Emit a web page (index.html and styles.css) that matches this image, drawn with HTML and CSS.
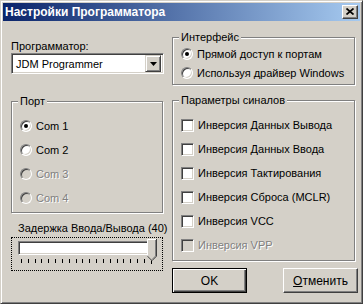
FILE: index.html
```html
<!DOCTYPE html>
<html lang="ru">
<head>
  <meta charset="UTF-8">
  <title>Настройки Программатора</title>
  <link rel="stylesheet" href="styles.css">
</head>
<body>
  <div class="window">
    <div class="titlebar">
      <span class="title">Настройки Программатора</span>
      <span class="close">
        <svg width="8" height="7" viewBox="0 0 8 7"><path d="M0.5 0.5L7.5 6.5M7.5 0.5L0.5 6.5" stroke="#000" stroke-width="1.7"/></svg>
      </span>
    </div>

    <div class="client">
      <!-- left column -->
      <div class="col">
        <div class="label prog-label">Программатор:</div>
        <div class="combo">
          <span class="combo-text">JDM Programmer</span>
          <span class="combo-btn">
            <svg width="7" height="4" viewBox="0 0 7 4"><path d="M0 0H7L3.5 4Z" fill="#000"/></svg>
          </span>
        </div>

        <fieldset class="group port">
          <legend>Порт</legend>
          <div class="opts tall">
            <div class="opt"><span class="radio checked"></span><span>Com 1</span></div>
            <div class="opt"><span class="radio"></span><span>Com 2</span></div>
            <div class="opt disabled"><span class="radio"></span><span>Com 3</span></div>
            <div class="opt disabled"><span class="radio"></span><span>Com 4</span></div>
          </div>
        </fieldset>

        <div class="label delay-label">Задержка Ввода/Вывода (40)</div>
        <div class="trackbar">
          <div class="channel"></div>
          <div class="ticks">
            <i></i><i></i><i></i><i></i><i></i><i></i><i></i><i></i><i></i><i></i>
            <i></i><i></i><i></i><i></i><i></i><i></i><i></i><i></i><i></i><i class="last"></i>
          </div>
          <svg class="thumb" width="10" height="23" viewBox="0 0 10 23">
            <path d="M0 0H10V17L5 22L0 17Z" fill="#d4d0c8"/>
            <path d="M0.5 17V0.5H9" stroke="#fff" fill="none"/>
            <path d="M8.5 1V17L5 20.5" stroke="#808080" fill="none"/>
            <path d="M9.5 0V17.2L5 21.7L0.3 17" stroke="#404040" fill="none"/>
          </svg>
        </div>
      </div>

      <!-- right column -->
      <div class="col">
        <fieldset class="group iface">
          <legend>Интерфейс</legend>
          <div class="opts">
            <div class="opt"><span class="radio checked"></span><span>Прямой доступ к портам</span></div>
            <div class="opt"><span class="radio"></span><span>Используя драйвер Windows</span></div>
          </div>
        </fieldset>

        <fieldset class="group signals">
          <legend>Параметры синалов</legend>
          <div class="opts tall">
            <div class="opt"><span class="check"></span><span>Инверсия Данных Вывода</span></div>
            <div class="opt"><span class="check"></span><span>Инверсия Данных Ввода</span></div>
            <div class="opt"><span class="check"></span><span>Инверсия Тактирования</span></div>
            <div class="opt"><span class="check"></span><span>Инверсия Сброса (MCLR)</span></div>
            <div class="opt"><span class="check"></span><span>Инверсия VCC</span></div>
            <div class="opt disabled"><span class="check"></span><span>Инверсия VPP</span></div>
          </div>
        </fieldset>

        <div class="buttons">
          <button class="btn default">OK</button>
          <button class="btn"><u>О</u>тменить</button>
        </div>
      </div>
    </div>
  </div>
</body>
</html>
```

FILE: styles.css
```css
/* Windows 2000 style dialog */
body {
  margin: 0;
  font-family: 'Liberation Sans', Arial, sans-serif;
  font-size: 11px;
  color: #000;
  background: #d4d0c8;
}

.window {
  width: 363px;
  height: 304px;
  box-sizing: border-box;
  background: #d4d0c8;
  border: 1px solid;
  border-color: #d4d0c8 #404040 #404040 #d4d0c8;
  box-shadow: inset 1px 1px #fff, inset -1px -1px #808080;
  padding: 2px;
  display: flex;
  flex-direction: column;
}

.titlebar {
  height: 18px;
  display: flex;
  align-items: center;
  justify-content: space-between;
  background: linear-gradient(to right, #0a246a, #a6caf0);
  padding: 0 2px 0 2px;
}

.title {
  color: #fff;
  font-weight: bold;
  font-size: 12px;
}

.close {
  width: 16px;
  height: 14px;
  box-sizing: border-box;
  display: flex;
  align-items: center;
  justify-content: center;
  background: #d4d0c8;
  border: 1px solid;
  border-color: #fff #404040 #404040 #fff;
  box-shadow: inset -1px -1px #808080;
  padding-bottom: 1px;
}

.client {
  display: grid;
  grid-template-columns: 153px 186px;
  column-gap: 8px;
  padding-left: 8px;
}

.col {
  display: flex;
  flex-direction: column;
  align-items: flex-start;
}

.label {
  line-height: 13px;
  white-space: nowrap;
}

.prog-label {
  margin-top: 19px;
}

/* combobox */
.combo {
  width: 153px;
  height: 21px;
  box-sizing: border-box;
  background: #fff;
  border: 1px solid;
  border-color: #808080 #fff #fff #808080;
  box-shadow: inset 1px 1px #404040, inset -1px -1px #d4d0c8;
  display: flex;
  align-items: center;
  justify-content: space-between;
  padding: 2px;
}

.combo-text {
  padding-left: 2px;
}

.combo-btn {
  width: 16px;
  height: 17px;
  box-sizing: border-box;
  background: #d4d0c8;
  border: 1px solid;
  border-color: #d4d0c8 #404040 #404040 #d4d0c8;
  box-shadow: inset 1px 1px #fff, inset -1px -1px #808080;
  display: flex;
  align-items: center;
  justify-content: center;
}

/* group boxes */
.group {
  margin: 0;
  padding: 0 0 0 8px;
  min-width: 0;
  box-sizing: border-box;
  border: 1px solid #808080;
  box-shadow: inset 1px 1px #fff, 1px 1px #fff;
}

.group legend {
  margin-left: -2px;
  padding: 0 2px;
  line-height: 13px;
  background: #d4d0c8;
  white-space: nowrap;
}

.port {
  width: 152px;
  margin-top: 21px;
  padding-bottom: 2px;
}

.iface {
  width: 183px;
  margin-top: 10px;
  padding-bottom: 2px;
}

.signals {
  width: 183px;
  margin-top: 9px;
  padding-bottom: 3px;
}

.opts {
  display: flex;
  flex-direction: column;
}

.opts.tall {
  padding-top: 6px;
}

.opt {
  height: 19px;
  display: flex;
  align-items: center;
  gap: 4px;
  white-space: nowrap;
}

.opts.tall .opt {
  height: 24px;
}

.opt.disabled {
  color: #808080;
  text-shadow: 1px 1px #fff;
}

.radio {
  width: 12px;
  height: 12px;
  box-sizing: border-box;
  border-radius: 50%;
  background: #fff;
  border: 1px solid;
  border-color: #808080 #fff #fff #808080;
  box-shadow: inset 1px 1px #404040, inset -1px -1px #d4d0c8;
  display: flex;
  align-items: center;
  justify-content: center;
}

.radio.checked::after {
  content: '';
  width: 4px;
  height: 4px;
  border-radius: 50%;
  background: #000;
}

.check {
  width: 13px;
  height: 13px;
  box-sizing: border-box;
  background: #fff;
  border: 1px solid;
  border-color: #808080 #fff #fff #808080;
  box-shadow: inset 1px 1px #404040, inset -1px -1px #d4d0c8;
}

.opt.disabled .radio,
.opt.disabled .check {
  background: #d4d0c8;
}

/* trackbar */
.delay-label {
  margin-top: 9px;
  padding-left: 7px;
}

.trackbar {
  position: relative;
  width: 152px;
  height: 34px;
  box-sizing: border-box;
  margin-top: 2px;
  border: 1px dotted #000;
  padding: 3px 0 0 6px;
}

.channel {
  width: 132px;
  height: 14px;
  box-sizing: border-box;
  background: #fff;
  border: 1px solid;
  border-color: #808080 #fff #fff #808080;
  box-shadow: inset 1px 1px #404040, inset -1px -1px #d4d0c8;
}

.ticks {
  width: 131px;
  margin: 4px 0 0 3px;
  display: flex;
  justify-content: space-between;
  align-items: flex-start;
}

.ticks i {
  width: 1px;
  height: 4px;
  background: #000;
}

.ticks i.last {
  height: 5px;
}

.thumb {
  position: absolute;
  left: 135px;
  top: 1px;
}

/* buttons */
.buttons {
  width: 186px;
  margin-top: 7px;
  display: flex;
  justify-content: space-between;
}

.btn {
  width: 75px;
  height: 25px;
  box-sizing: border-box;
  font-family: inherit;
  font-size: 12px;
  color: #000;
  background: #d4d0c8;
  border: 1px solid;
  border-color: #fff #404040 #404040 #fff;
  box-shadow: inset -1px -1px #808080, inset 1px 1px #d4d0c8;
  padding: 0;
}

.btn.default {
  border-color: #000;
  box-shadow: inset 1px 1px #fff, inset -1px -1px #404040, inset -2px -2px #808080;
}
```
